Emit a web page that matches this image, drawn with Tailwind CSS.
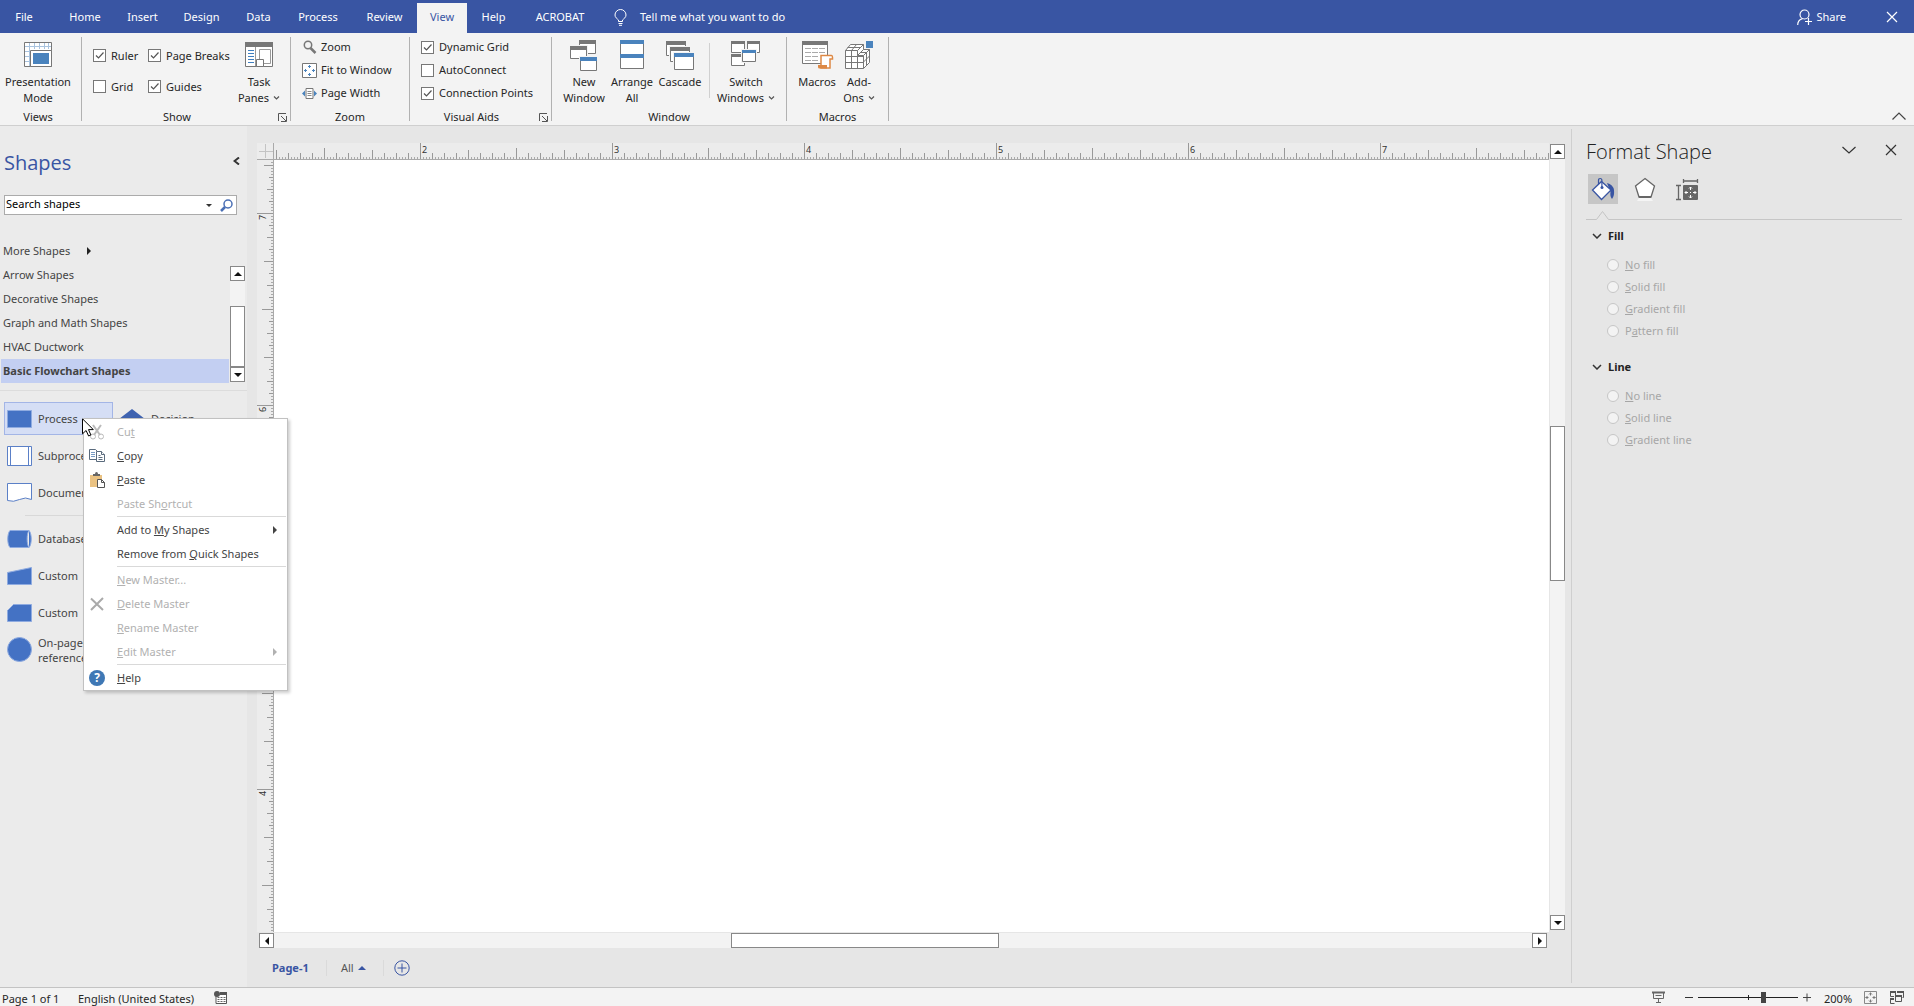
<!DOCTYPE html>
<html lang="en">
<head>
    <meta charset="UTF-8">
    <meta name="viewport" content="width=device-width, initial-scale=1.0">
    <title>Drawing - Page-1</title>
    <script src="https://cdn.jsdelivr.net/npm/@tailwindcss/browser@4"></script>
</head>
<body class="flex h-screen flex-col overflow-hidden bg-[#e6e6e6] font-['Noto_Sans','Open_Sans',sans-serif] text-[11px] leading-4 text-[#262626]">

    <!-- Shared icon symbols -->
    <svg class="hidden" aria-hidden="true">
        <symbol id="tick" viewBox="0 0 13 13"><path d="M3 6.5 5.5 9 10.5 3.5" fill="none" stroke="#555" stroke-width="1.2"/></symbol>
        <symbol id="caret" viewBox="0 0 7 4"><path d="M1 .5 3.5 3 6 .5" fill="none" stroke="#555" stroke-width="1.2"/></symbol>
        <symbol id="launcher" viewBox="0 0 9 9"><path d="M.5 8V.5H8M8.500 3v5.500H3M3 3l5 5" fill="none" stroke="#555"/></symbol>
        <symbol id="chev-down" viewBox="0 0 10 6"><path d="M1 1l4 4 4-4" fill="none" stroke="#333" stroke-width="1.5"/></symbol>
        <symbol id="cross" viewBox="0 0 12 12"><path d="M1 1l10 10M11 1L1 11" fill="none" stroke="currentColor" stroke-width="1.200"/></symbol>
        <symbol id="tri-up" viewBox="0 0 8 4"><path d="M0 4 4 0 8 4z" fill="currentColor"/></symbol>
        <symbol id="tri-down" viewBox="0 0 8 4"><path d="M0 0h8L4 4z" fill="currentColor"/></symbol>
        <symbol id="tri-right" viewBox="0 0 4 8"><path d="M0 0v8l4-4z" fill="currentColor"/></symbol>
        <symbol id="tri-left" viewBox="0 0 4 8"><path d="M4 0v8L0 4z" fill="currentColor"/></symbol>
    </svg>

    <!-- Tab bar -->
    <header class="flex h-[33px] shrink-0 items-end bg-[#3955a3] text-white">
        <nav class="flex h-[30px]">
            <button class="w-12 pb-[2px]">File</button>
            <button class="ml-[7px] w-[60px] pb-[2px]">Home</button>
            <button class="w-[55px] pb-[2px]">Insert</button>
            <button class="w-[63px] pb-[2px]">Design</button>
            <button class="w-[51px] pb-[2px]">Data</button>
            <button class="w-[68px] pb-[2px]">Process</button>
            <button class="w-[65px] pb-[2px]">Review</button>
            <button class="w-[50px] bg-[#f3f3f3] pb-[2px] text-[#3955a3]">View</button>
            <button class="w-[53px] pb-[2px]">Help</button>
            <button class="w-[80px] pb-[2px]">ACROBAT</button>
        </nav>
        <button class="ml-[14px] flex h-[30px] items-center pb-[2px]">
            <svg class="mr-[13px] h-[17px] w-[13px]" viewBox="0 0 13 17" fill="none" stroke="#fff"><path d="M4.500 12.500V11C3 9.500 1 8.500 1 6a5.500 5.500 0 0 1 11 0c0 2.500-2 3.500-3.500 5v1.500zM4.500 14.500h4M5 16.300h3"/></svg>
            Tell me what you want to do
        </button>
        <button class="ml-auto flex h-[30px] items-center gap-1 pb-[2px]">
            <svg class="h-[17px] w-[15px]" viewBox="0 0 15 17" fill="none" stroke="#fff" stroke-width="1.200"><circle cx="7.500" cy="5.500" r="4.500"/><path d="M.7 16c0-3.500 2-5.500 4.800-6.300M11.500 9v7M8 12.500h7"/></svg>
            Share
        </button>
        <button class="mr-4 ml-10 flex h-[30px] items-center pb-[2px]" aria-label="Close">
            <svg class="size-3"><use href="#cross"/></svg>
        </button>
    </header>

    <!-- Ribbon -->
    <div class="flex h-[93px] shrink-0 border-b border-[#cfcfcf] bg-[#f3f3f3]">
        <section class="flex w-[81px] shrink-0 flex-col items-center pt-1">
            <div class="h-[72px] pt-0.5 pr-[5px]">
                <button class="flex flex-col items-center">
                    <svg class="mb-px size-[34px]" viewBox="0 0 34 34">
                        <path d="M3.500 3.500h27v24h-27z" fill="#fff" stroke="#777"/>
                        <path d="M4 7.500h26M4 12.500h5M4 17.500h5M4 22.500h5M8.500 4v23M13.500 4v6M18.500 4v6M23.500 4v6M27.500 4v6" stroke="#a9c3de"/>
                        <path d="M9.500 11.500h21v16h-21z" fill="#fff" stroke="#777"/>
                        <path d="M12 14h16v11H12z" fill="#4a83bd"/>
                    </svg>
                    <span>Presentation</span><span>Mode</span>
                </button>
            </div>
            <h2 class="pr-[5px]">Views</h2>
        </section>
        <div class="my-1 w-px shrink-0 bg-[#b1b1b1]"></div>

        <section class="relative flex w-[208px] shrink-0 flex-col pt-1">
            <div class="flex h-[72px] pl-[11px]">
                <div class="grid w-[144px] grid-cols-[55px_1fr] grid-rows-[31px_31px] items-center pt-[3px]">
                    <label class="relative flex items-center gap-[5px]"><input type="checkbox" checked class="size-[13px] appearance-none border border-[#777] bg-white"><svg class="absolute left-0 size-[13px]"><use href="#tick"/></svg>Ruler</label>
                    <label class="relative flex items-center gap-[5px]"><input type="checkbox" checked class="size-[13px] appearance-none border border-[#777] bg-white"><svg class="absolute left-0 size-[13px]"><use href="#tick"/></svg>Page Breaks</label>
                    <label class="relative flex items-center gap-[5px]"><input type="checkbox" class="size-[13px] appearance-none border border-[#777] bg-white">Grid</label>
                    <label class="relative flex items-center gap-[5px]"><input type="checkbox" checked class="size-[13px] appearance-none border border-[#777] bg-white"><svg class="absolute left-0 size-[13px]"><use href="#tick"/></svg>Guides</label>
                </div>
                <button class="flex w-[44px] flex-col items-center pt-0.5">
                    <svg class="mb-px size-[34px]" viewBox="0 0 34 34">
                        <path d="M3.500 3.500h27v24h-27z" fill="#fff" stroke="#777"/>
                        <path d="M3 3h28v5H3z" fill="#777"/>
                        <path d="M13.500 8v19" stroke="#999"/>
                        <path d="M6 11.500h6M6 14.500h6M6 17.500h6M6 20.500h6M6 23.500h6" stroke="#3f7fc0"/>
                        <path d="M17.500 10.500h11v14h-11z" fill="#fff" stroke="#999"/>
                        <path d="M14.500 20.500h7v7h-7z" fill="#fff" stroke="#777"/>
                    </svg>
                    <span>Task</span>
                    <span class="flex items-center gap-1">Panes <svg class="h-1 w-[7px]"><use href="#caret"/></svg></span>
                </button>
            </div>
            <h2 class="pr-[18px] text-center">Show</h2>
            <button class="absolute right-[3px] bottom-[3px]" aria-label="Show settings"><svg class="size-[9px]"><use href="#launcher"/></svg></button>
        </section>
        <div class="my-1 w-px shrink-0 bg-[#b1b1b1]"></div>

        <section class="flex w-[118px] shrink-0 flex-col pt-1">
            <div class="flex h-[72px] flex-col gap-[7px] pt-0.5 pl-[11px]">
                <button class="flex items-center gap-1">
                    <svg class="size-[15px]" viewBox="0 0 15 15" fill="none" stroke="#777"><circle cx="6" cy="5" r="3.700" stroke-width="1.500"/><path d="M8.500 8l5 5" stroke-width="2.500"/></svg>Zoom
                </button>
                <button class="flex items-center gap-1">
                    <svg class="size-[15px]" viewBox="0 0 15 15"><path d="M.5.5h14v14H.5z" fill="#fff" stroke="#777"/><path d="M7.500 2v3M7.500 10v3M2 7.500h3M10 7.500h3M6 4l1.500-1.500L9 4M6 11l1.500 1.500L9 11M4 6 2.500 7.500 4 9M11 6l1.500 1.500L11 9" fill="none" stroke="#4a83bd"/></svg>Fit to Window
                </button>
                <button class="flex items-center gap-1">
                    <svg class="size-[15px]" viewBox="0 0 15 15"><path d="M4 2.500h7v10H4z" fill="#fff" stroke="#777"/><path d="M5.500 5.500h4M5.500 7.500h4M5.500 9.500h4" stroke="#888"/><path d="M0 7.500 3 4.500v6zM15 7.500l-3-3v6z" fill="#4a83bd"/></svg>Page Width
                </button>
            </div>
            <h2 class="text-center">Zoom</h2>
        </section>
        <div class="my-1 w-px shrink-0 bg-[#b1b1b1]"></div>

        <section class="relative flex w-[141px] shrink-0 flex-col pt-1">
            <div class="flex h-[72px] flex-col gap-[7px] pt-0.5 pl-[11px]">
                <label class="relative flex items-center gap-[5px]"><input type="checkbox" checked class="size-[13px] appearance-none border border-[#777] bg-white"><svg class="absolute left-0 size-[13px]"><use href="#tick"/></svg>Dynamic Grid</label>
                <label class="relative flex items-center gap-[5px]"><input type="checkbox" class="size-[13px] appearance-none border border-[#777] bg-white">AutoConnect</label>
                <label class="relative flex items-center gap-[5px]"><input type="checkbox" checked class="size-[13px] appearance-none border border-[#777] bg-white"><svg class="absolute left-0 size-[13px]"><use href="#tick"/></svg>Connection Points</label>
            </div>
            <h2 class="pr-[18px] text-center">Visual Aids</h2>
            <button class="absolute right-[3px] bottom-[3px]" aria-label="Visual aid settings"><svg class="size-[9px]"><use href="#launcher"/></svg></button>
        </section>
        <div class="my-1 w-px shrink-0 bg-[#b1b1b1]"></div>

        <section class="flex w-[234px] shrink-0 flex-col pt-1">
            <div class="flex h-[72px] pt-0.5 pl-2">
                <button class="flex w-12 flex-col items-center">
                    <svg class="mb-px size-[34px]" viewBox="0 0 34 34">
                        <path d="M12.500 1.500h16v13h-16z" fill="#fff" stroke="#777"/><path d="M12 1h17v4H12z" fill="#777"/>
                        <path d="M3 6h18v15H3z" fill="#f3f3f3"/><path d="M3.500 7.500h16v12h-16z" fill="#fff" stroke="#777"/><path d="M3 7h17v4H3z" fill="#777"/>
                        <path d="M12 17h18v15H12z" fill="#f3f3f3"/><path d="M13.500 18.500h16v13h-16z" fill="#fff" stroke="#777"/><path d="M13 18h17v4H13z" fill="#4a83bd"/>
                    </svg>
                    <span>New</span><span>Window</span>
                </button>
                <button class="flex w-12 flex-col items-center">
                    <svg class="mb-px size-[34px]" viewBox="0 0 34 34">
                        <path d="M5.500 1.500h23v28h-23z" fill="#fff" stroke="#777"/><path d="M5 1h24v4H5zM5 15h24v4H5z" fill="#4a83bd"/>
                    </svg>
                    <span>Arrange</span><span>All</span>
                </button>
                <button class="flex w-12 flex-col items-center">
                    <svg class="mb-px size-[34px]" viewBox="0 0 34 34">
                        <path d="M3.500 2.500h19v14h-19z" fill="#fff" stroke="#777"/><path d="M3 2h20v4H3z" fill="#777"/>
                        <path d="M6 7h22v17H6z" fill="#f3f3f3"/><path d="M7.500 8.500h19v14h-19z" fill="#fff" stroke="#777"/><path d="M7 8h20v4H7z" fill="#777"/>
                        <path d="M10 13h22v17H10z" fill="#f3f3f3"/><path d="M11.500 14.500h19v16h-19z" fill="#fff" stroke="#777"/><path d="M11 14h20v4H11z" fill="#4a83bd"/>
                    </svg>
                    <span>Cascade</span>
                </button>
                <div class="mt-1 ml-[5px] h-[55px] w-px bg-[#d0d0d0]"></div>
                <button class="ml-1 flex w-[64px] flex-col items-center">
                    <svg class="mb-px size-[34px]" viewBox="0 0 34 34">
                        <path d="M2.500 2.500h13v11h-13zM18.500 2.500h12v11h-12zM2.500 15.500h13v11h-13z" fill="#fff" stroke="#777"/><path d="M2 2h14v3H2zM18 2h13v3H18zM2 15h14v3H2z" fill="#777"/>
                        <path d="M12 10h16v14H12z" fill="#f3f3f3"/><path d="M13.500 11.500h13v11h-13z" fill="#fff" stroke="#777"/><path d="M13 11h14v3H13z" fill="#4a83bd"/>
                    </svg>
                    <span>Switch</span>
                    <span class="flex items-center gap-1">Windows <svg class="h-1 w-[7px]"><use href="#caret"/></svg></span>
                </button>
            </div>
            <h2 class="text-center">Window</h2>
        </section>
        <div class="my-1 w-px shrink-0 bg-[#b1b1b1]"></div>

        <section class="flex w-[101px] shrink-0 flex-col pt-1">
            <div class="flex h-[72px] pt-0.5 pl-[7px]">
                <button class="flex w-[46px] flex-col items-center">
                    <svg class="mb-px size-[34px]" viewBox="0 0 34 34">
                        <path d="M2.500 2.500h25v22h-25z" fill="#fff" stroke="#777"/><path d="M2 2h26v4H2z" fill="#777"/>
                        <path d="M5 9.500h20M5 13.500h20M5 17.500h14M5 21.500h14" stroke="#aaa" stroke-dasharray="6 1"/>
                        <path d="M21 16.500h10.500q1 0 1 2v1.500h-2.500v9H21z" fill="#fff" stroke="#dd8844" stroke-width="1.500"/><path d="M18 26h9v3.500h-7.500q-1.500 0-1.500-1.500z" fill="#dd8844"/>
                    </svg>
                    <span>Macros</span>
                </button>
                <button class="flex w-[38px] flex-col items-center">
                    <svg class="mb-px size-[34px]" viewBox="0 0 34 34">
                        <path d="M3.500 11.500 8.500 5.500h13v4l6 1v13l-6 6h-18z" fill="#fff"/>
                        <path d="M3.500 11.500h12v5h6v13h-18zM3.500 17.500h18M3.500 23.500h18M9.500 11.500v18M15.500 16.500v13M3.500 11.500l5-6h13l-6 6M9.500 11.500l5-6M5.500 8.500h13M21.500 5.500v5M15.500 16.500l6-6h6l-6 6M18.500 13.500h6M27.500 10.500v13l-6 6M21.500 23l6-6M24.500 13.500v13" fill="none" stroke="#777"/>
                        <path d="M24 2h7v7h-7z" fill="#4a83bd"/>
                    </svg>
                    <span>Add-</span>
                    <span class="flex items-center gap-1">Ons <svg class="h-1 w-[7px]"><use href="#caret"/></svg></span>
                </button>
            </div>
            <h2 class="text-center">Macros</h2>
        </section>
        <div class="my-1 w-px shrink-0 bg-[#b1b1b1]"></div>
        <button class="mt-auto mr-2 mb-[5px] ml-auto" aria-label="Collapse ribbon">
            <svg class="h-2 w-[14px]" viewBox="0 0 14 8"><path d="M.5 7.500 7 1l6.500 6.500" fill="none" stroke="#444" stroke-width="1.200"/></svg>
        </button>
    </div>

    <div class="flex min-h-0 flex-1">
        <!-- Shapes pane -->
        <aside class="flex w-[247px] shrink-0 flex-col bg-[#ebebeb] pt-[23px] text-[#444]">
            <div class="flex h-7 items-center justify-between pr-[7px] pl-1">
                <h1 class="font-['Open_Sans',sans-serif] text-[20px] leading-7 text-[#3955a3]">Shapes</h1>
                <button class="pb-1" aria-label="Minimize pane"><svg class="h-2 w-[7px]" viewBox="0 0 7 8"><path d="M6 .5 1.500 4 6 7.500" fill="none" stroke="#333" stroke-width="2"/></svg></button>
            </div>
            <div class="mt-[18px] mr-[10px] ml-1 flex h-5 items-center border border-[#ababab] bg-white">
                <input type="text" value="Search shapes" aria-label="Search shapes" class="min-w-0 flex-1 pb-0.5 pl-px text-black outline-none">
                <svg class="h-[3px] w-[6px] text-[#333]"><use href="#tri-down"/></svg>
                <button class="mr-[3px] ml-2" aria-label="Search"><svg class="size-[13px]" viewBox="0 0 13 13" fill="none" stroke="#4a6fb5"><circle cx="8" cy="5" r="4" stroke-width="1.500"/><path d="M5 8l-4 4" stroke-width="2.500"/></svg></button>
            </div>
            <button class="mt-6 flex h-6 items-center gap-[17px] pl-[3px]">More Shapes <svg class="h-2 w-1 text-[#222]"><use href="#tri-right"/></svg></button>
            <div class="flex">
                <ul class="mr-px ml-px flex-1 leading-6 *:pl-0.5">
                    <li>Arrow Shapes</li>
                    <li>Decorative Shapes</li>
                    <li>Graph and Math Shapes</li>
                    <li>HVAC Ductwork</li>
                    <li class="bg-[#c3cff2] font-bold">Basic Flowchart Shapes</li>
                </ul>
                <div class="mt-[3px] mr-0.5 flex h-[116px] w-[15px] flex-col bg-[#f3f3f3] text-[#111]">
                    <button class="grid h-[15px] place-items-center border border-[#888] bg-white" aria-label="Scroll up"><svg class="h-1 w-2"><use href="#tri-up"/></svg></button>
                    <div class="mt-auto h-[61px] border border-[#888] bg-white"></div>
                    <button class="grid h-[15px] place-items-center border border-[#888] bg-white" aria-label="Scroll down"><svg class="h-1 w-2"><use href="#tri-down"/></svg></button>
                </div>
            </div>
            <div class="mt-[7px] border-t border-[#dcdcdc]"></div>
            <div class="flex flex-col gap-1 pt-[11px] pl-1 leading-[15px]">
                <div class="flex">
                    <button class="flex h-[33px] w-[109px] items-center border border-[#a3b5e6] bg-[#d5def5] pl-0.5">
                        <svg class="mr-[6px] h-[18px] w-[25px]" viewBox="0 0 25 18"><path d="M.5.500h24v17H.5z" fill="#4472c4" stroke="#8fabe0"/></svg>Process
                    </button>
                    <button class="flex h-[33px] items-center pl-[6px]">
                        <svg class="mr-[6px] h-[20px] w-[26px]" viewBox="0 0 26 20"><path d="M13 0 26 10 13 20 0 10z" fill="#3f63b0"/></svg>Decision
                    </button>
                </div>
                <button class="flex h-[33px] items-center pl-[3px]">
                    <svg class="mr-[6px] h-[20px] w-[25px]" viewBox="0 0 25 20"><path d="M.5.500h24v19H.5zM3.500.500v19M21.500.500v19" fill="#fff" stroke="#5b80c7"/></svg>Subprocess
                </button>
                <button class="flex h-[33px] items-center pl-[3px]">
                    <svg class="mr-[6px] h-[20px] w-[25px]" viewBox="0 0 25 20"><path d="M.5.500h24v16q-6-3-12 0t-12 1z" fill="#fff" stroke="#5b80c7"/></svg>Document
                </button>
                <div class="mt-0.5 mr-6 mb-0.5 ml-[21px] border-t border-[#d8d8d8]"></div>
                <button class="flex h-[33px] items-center pl-[3px]">
                    <svg class="mr-[6px] h-[18px] w-[25px]" viewBox="0 0 25 18"><path d="M3 .500h19c3 3 3 14 0 17H3C0 14.500 0 3.500 3 .500zM22 .500c-2.500 3-2.500 14 0 17" fill="#4472c4" stroke="#8fabe0"/></svg>Database
                </button>
                <button class="flex h-[33px] items-center pl-[3px]">
                    <svg class="mr-[6px] h-[18px] w-[25px]" viewBox="0 0 25 18"><path d="M.5 5.500 24.500.500v17H.5z" fill="#4472c4" stroke="#8fabe0"/></svg>Custom&ensp;1
                </button>
                <button class="flex h-[33px] items-center pl-[3px]">
                    <svg class="mr-[6px] h-[18px] w-[25px]" viewBox="0 0 25 18"><path d="M.5 6.500 6.500.500h18v17H.5z" fill="#4472c4" stroke="#8fabe0"/></svg>Custom&ensp;2
                </button>
                <button class="flex h-[33px] items-center pl-[3px] text-left">
                    <svg class="mr-[6px] size-[25px]" viewBox="0 0 25 25"><circle cx="12.500" cy="12.500" r="12" fill="#4472c4" stroke="#8fabe0"/></svg>On-page<br>reference
                </button>
            </div>
        </aside>

        <!-- Drawing window -->
        <main class="flex min-w-0 flex-1 flex-col pt-[17px] pl-[10px]">
            <div class="flex min-h-0 flex-1">
                <div class="flex min-w-0 flex-1 flex-col">
                    <div class="flex h-[17px] bg-[#ececec]">
                        <svg class="h-[17px] w-[17px] shrink-0" viewBox="0 0 17 17"><path d="M8.500 1v14M2 8.500h14" stroke="#c4c4c4"/><path d="M0 16.500h17M16.500 0v17" stroke="#aaa"/></svg>
                        <svg class="h-[17px] min-w-0 flex-1" shape-rendering="crispEdges">
                            <defs>
                                <pattern id="h3" x="146" width="3" height="17" patternUnits="userSpaceOnUse"><path d="M0 14h1v2H0z" fill="#aaa"/></pattern>
                                <pattern id="h12" x="146" width="12" height="17" patternUnits="userSpaceOnUse"><path d="M0 10h1v6H0z" fill="#999"/></pattern>
                                <pattern id="h48" x="146" width="48" height="17" patternUnits="userSpaceOnUse"><path d="M0 7h1v9H0z" fill="#999"/></pattern>
                                <pattern id="h96" x="146" width="96" height="17" patternUnits="userSpaceOnUse"><path d="M0 5h1v11H0z" fill="#999"/></pattern>
                                <pattern id="h192" x="146" width="192" height="17" patternUnits="userSpaceOnUse"><path d="M0 0h1v16H0z" fill="#999"/></pattern>
                            </defs>
                            <rect width="100%" height="17" fill="url(#h3)"/><rect width="100%" height="17" fill="url(#h12)"/><rect width="100%" height="17" fill="url(#h48)"/><rect width="100%" height="17" fill="url(#h96)"/><rect width="100%" height="17" fill="url(#h192)"/>
                            <rect y="16" width="100%" height="1" fill="#aaa"/>
                            <g font-size="9" fill="#333">
                                <text x="148" y="10">2</text><text x="340" y="10">3</text><text x="532" y="10">4</text><text x="724" y="10">5</text><text x="916" y="10">6</text><text x="1108" y="10">7</text>
                            </g>
                        </svg>
                    </div>
                    <div class="flex min-h-0 flex-1">
                        <svg class="h-full w-[17px] shrink-0 bg-[#ececec]" shape-rendering="crispEdges">
                            <defs>
                                <pattern id="v3" y="53" width="17" height="3" patternUnits="userSpaceOnUse"><path d="M14 0h2v1h-2z" fill="#aaa"/></pattern>
                                <pattern id="v12" y="53" width="17" height="12" patternUnits="userSpaceOnUse"><path d="M12 0h4v1h-4z" fill="#999"/></pattern>
                                <pattern id="v24" y="53" width="17" height="24" patternUnits="userSpaceOnUse"><path d="M10 0h6v1h-6z" fill="#999"/></pattern>
                                <pattern id="v48" y="53" width="17" height="48" patternUnits="userSpaceOnUse"><path d="M7 0h9v1H7z" fill="#999"/></pattern>
                                <pattern id="v96" y="53" width="17" height="96" patternUnits="userSpaceOnUse"><path d="M5 0h11v1H5z" fill="#999"/></pattern>
                                <pattern id="v192" y="53" width="17" height="192" patternUnits="userSpaceOnUse"><path d="M0 0h16v1H0z" fill="#999"/></pattern>
                            </defs>
                            <rect width="17" height="100%" fill="url(#v3)"/><rect width="17" height="100%" fill="url(#v12)"/><rect width="17" height="100%" fill="url(#v24)"/><rect width="17" height="100%" fill="url(#v48)"/><rect width="17" height="100%" fill="url(#v96)"/><rect width="17" height="100%" fill="url(#v192)"/>
                            <rect x="16" width="1" height="100%" fill="#aaa"/>
                            <g font-size="9" fill="#333">
                                <text transform="translate(9 60) rotate(-90)">7</text><text transform="translate(9 252) rotate(-90)">6</text><text transform="translate(9 444) rotate(-90)">5</text><text transform="translate(9 636) rotate(-90)">4</text>
                            </g>
                        </svg>
                        <div class="flex-1 bg-white"></div>
                    </div>
                </div>
                <div class="mt-px mr-[6px] mb-0.5 ml-px flex w-[15px] flex-col bg-[#f3f3f3] text-[#111]">
                    <button class="grid h-[15px] place-items-center border border-[#888] bg-white" aria-label="Scroll up"><svg class="h-1 w-2"><use href="#tri-up"/></svg></button>
                    <div class="grow-[267]"></div>
                    <div class="h-[155px] border border-[#888] bg-white"></div>
                    <div class="grow-[333]"></div>
                    <button class="grid h-[15px] place-items-center border border-[#888] bg-white" aria-label="Scroll down"><svg class="h-1 w-2"><use href="#tri-down"/></svg></button>
                </div>
            </div>
            <div class="mt-px mr-6 ml-0.5 flex h-[15px] shrink-0 bg-[#f3f3f3] text-[#111]">
                <button class="grid w-[15px] place-items-center border border-[#888] bg-white" aria-label="Scroll left"><svg class="h-2 w-1"><use href="#tri-left"/></svg></button>
                <div class="grow-[457]"></div>
                <div class="w-[268px] border border-[#888] bg-white"></div>
                <div class="grow-[533]"></div>
                <button class="grid w-[15px] place-items-center border border-[#888] bg-white" aria-label="Scroll right"><svg class="h-2 w-1"><use href="#tri-right"/></svg></button>
            </div>
            <!-- Page tabs -->
            <nav class="flex h-[39px] shrink-0 items-center pl-[15px]">
                <button class="w-[54px] text-left font-bold text-[#3955a3]">Page-1</button>
                <div class="h-4 w-px bg-[#dadada]"></div>
                <button class="flex w-14 items-center gap-1 pl-[14px] text-[#555]">All <svg class="h-1 w-2 text-[#3955a3]"><use href="#tri-up"/></svg></button>
                <div class="h-4 w-px bg-[#dadada]"></div>
                <button class="pl-[10px]" aria-label="Insert page"><svg class="size-4" viewBox="0 0 16 16" fill="none" stroke="#3955a3"><circle cx="8" cy="8" r="7.200"/><path d="M8 3.500v9M3.500 8h9"/></svg></button>
            </nav>
        </main>

        <!-- Format Shape pane -->
        <aside class="mt-[3px] mb-1 flex w-[343px] shrink-0 flex-col border-l border-[#cfcfcf] pt-[9px] pr-3 pl-[14px]">
            <div class="flex h-7 items-center">
                <h1 class="mr-auto font-['Open_Sans',sans-serif] text-[20px] leading-7 font-light text-[#222]">Format Shape</h1>
                <button class="mb-1" aria-label="Pane options"><svg class="h-2 w-[14px]" viewBox="0 0 14 8"><path d="M.5 1 7 7l6.500-6" fill="none" stroke="#333" stroke-width="1.200"/></svg></button>
                <button class="mr-[5px] mb-1 ml-[29px] text-[#333]" aria-label="Close pane"><svg class="size-3"><use href="#cross"/></svg></button>
            </div>
            <div class="mt-2 flex gap-3 pl-0.5">
                <button class="grid size-[30px] place-items-center bg-[#c6c6c6]" aria-label="Fill and line">
                    <svg class="size-6" viewBox="0 0 24 24"><path d="M16 6q6 1.500 7 7c.3 4 0 6-2 9-1.500-2-2-4-1.500-7z" fill="#3955a3"/><path d="M10.500 4.500 20 13l-9.500 9.500L1.500 13z" fill="#fff" stroke="#3955a3" stroke-width="1.300"/><path d="M7.500 7V3.500q0-2 1.700-2t1.700 2V10" fill="none" stroke="#3955a3" stroke-width="1.200"/><circle cx="11" cy="10.500" r="1.500" fill="#3955a3"/></svg>
                </button>
                <button class="grid size-[30px] place-items-center" aria-label="Effects">
                    <svg class="size-6" viewBox="0 0 24 24"><path d="M12 1.500 21.500 9l-3.500 11H6L2.500 9z" fill="#fff" stroke="#666" stroke-width="1.300"/><path d="M6 20h12" stroke="#666" stroke-width="2"/><path d="M6 21h12l2 3H4z" fill="#f5f5f5"/></svg>
                </button>
                <button class="grid size-[30px] place-items-center" aria-label="Size">
                    <svg class="size-6" viewBox="0 0 24 24"><path d="M8.500 2v4M22.500 2v4M9 4h13M1 8.500h5M1 22.500h5M3.500 9v13" fill="none" stroke="#666" stroke-width="1.300"/><rect x="8" y="8" width="15" height="15" rx="1" fill="#666"/><path d="M15.500 10v3M15.500 18v3M10 15.500h3M18 15.500h3M14 11.500l1.500-1.500 1.500 1.500M14 19.500l1.500 1.500 1.500-1.500M11.500 14 10 15.500l1.500 1.500M19.500 14l1.500 1.500-1.500 1.500M15 15.500h1" fill="none" stroke="#fff"/></svg>
                </button>
            </div>
            <div class="mt-[6px] flex h-[10px] items-end">
                <svg class="h-[10px] w-[23px] shrink-0" viewBox="0 0 23 10"><path d="M0 9.500h10.500l6-8 6 8H23" fill="none" stroke="#c4c4c4"/></svg>
                <div class="flex-1 border-b border-[#c6c6c6]"></div>
            </div>
            <button class="mt-2 flex items-center gap-[6px] pl-[6px] font-bold text-[#222]"><svg class="h-[6px] w-[10px]"><use href="#chev-down"/></svg>Fill</button>
            <div class="mt-[10px] flex flex-col text-[#a6a6a6] *:flex *:h-[22px] *:items-center *:gap-[6px] *:pl-[21px]">
                <label><input type="radio" name="fill" disabled class="size-3 appearance-none rounded-full border border-[#c6c6c6] bg-[#f3f3f3]"><span><u>N</u>o fill</span></label>
                <label><input type="radio" name="fill" disabled class="size-3 appearance-none rounded-full border border-[#c6c6c6] bg-[#f3f3f3]"><span><u>S</u>olid fill</span></label>
                <label><input type="radio" name="fill" disabled class="size-3 appearance-none rounded-full border border-[#c6c6c6] bg-[#f3f3f3]"><span><u>G</u>radient fill</span></label>
                <label><input type="radio" name="fill" disabled class="size-3 appearance-none rounded-full border border-[#c6c6c6] bg-[#f3f3f3]"><span>P<u>a</u>ttern fill</span></label>
            </div>
            <button class="mt-[17px] flex items-center gap-[6px] pl-[6px] font-bold text-[#222]"><svg class="h-[6px] w-[10px]"><use href="#chev-down"/></svg>Line</button>
            <div class="mt-[10px] flex flex-col text-[#a6a6a6] *:flex *:h-[22px] *:items-center *:gap-[6px] *:pl-[21px]">
                <label><input type="radio" name="line" disabled class="size-3 appearance-none rounded-full border border-[#c6c6c6] bg-[#f3f3f3]"><span><u>N</u>o line</span></label>
                <label><input type="radio" name="line" disabled class="size-3 appearance-none rounded-full border border-[#c6c6c6] bg-[#f3f3f3]"><span><u>S</u>olid line</span></label>
                <label><input type="radio" name="line" disabled class="size-3 appearance-none rounded-full border border-[#c6c6c6] bg-[#f3f3f3]"><span><u>G</u>radient line</span></label>
            </div>
        </aside>
    </div>

    <!-- Status bar -->
    <footer class="flex h-[19px] shrink-0 items-center border-t border-[#c3c3c3] bg-[#f3f3f3] pt-[3px] pl-0.5">
        <span class="w-[76px]">Page 1 of 1</span>
        <span class="w-[136px]">English (United States)</span>
        <svg class="mb-[3px] h-[13px] w-[13px]" viewBox="0 0 13 13"><path d="M2 5v7.500h10.500V3" fill="#fff" stroke="#555"/><path d="M6 1h7v3H6z" fill="#555"/><circle cx="3" cy="3" r="3" fill="#555"/><path d="M3.500 6.500h8M3.500 8.500h8M3.500 10.500h8" stroke="#666" stroke-dasharray="2 1"/></svg>
        <svg class="mb-[3px] ml-auto h-3 w-[13px]" viewBox="0 0 13 12"><path d="M0 1.500h13" stroke="#666" stroke-width="2"/><path d="M1.500 2v5.500h10V2M3.500 4.500h6M6.500 8v3.500M4 11.500h5" fill="none" stroke="#666"/></svg>
        <button class="mb-[3px] ml-5" aria-label="Zoom out"><svg class="h-[9px] w-[8px]" viewBox="0 0 8 9"><path d="M0 4.500h8" stroke="#333"/></svg></button>
        <div class="relative mx-[5px] mb-[3px] flex h-[11px] w-[100px] items-center">
            <div class="absolute left-[50px] h-[5px] w-px bg-[#222]"></div>
            <input type="range" min="0" max="100" value="66" aria-label="Zoom level" class="relative h-[11px] w-full appearance-none bg-linear-to-b from-transparent from-45% via-[#222] via-50% to-transparent to-55% [&::-webkit-slider-thumb]:h-[11px] [&::-webkit-slider-thumb]:w-[5px] [&::-webkit-slider-thumb]:appearance-none [&::-webkit-slider-thumb]:bg-[#444]">
        </div>
        <button class="mb-[3px]" aria-label="Zoom in"><svg class="h-[9px] w-[8px]" viewBox="0 0 8 9"><path d="M0 4.500h8M4 .5v8" stroke="#444"/></svg></button>
        <button class="ml-[13px] w-10 text-left">200%</button>
        <button class="mb-[3px]" aria-label="Fit page"><svg class="size-[13px]" viewBox="0 0 13 13"><path d="M.5.500h12v12H.5z" fill="none" stroke="#888"/><path d="M6.500 1.500v3M6.500 8.500v3M1.500 6.500h3M8.500 6.500h3M5 3.500 6.500 2 8 3.500M5 9.500 6.500 11 8 9.500M3.500 5 2 6.500 3.500 8M9.500 5 11 6.500 9.500 8" fill="none" stroke="#777"/></svg></button>
        <button class="mr-[10px] mb-[3px] ml-[13px]" aria-label="Switch windows"><svg class="h-[13px] w-[14px]" viewBox="0 0 14 13" fill="none" stroke="#555"><path d="M4 5.500H.5v-4h5V4M7 1.500h6.500v5h-1M4.500 12.500h-4v-5H4"/><path d="M0 1h6M7 1h7M0 8h4M5 5h7" stroke-width="2"/><path d="M5.500 5v5.500h6V5"/></svg></button>
    </footer>

    <!-- Context menu -->
    <ul class="absolute top-[418px] left-[83px] w-[205px] border border-[#c1c1c1] bg-white pt-px text-[#444] shadow-[2px_2px_3px_rgba(0,0,0,0.2)]">
        <li><button disabled class="flex h-6 w-full items-center pl-[5px] text-[#b1b1b1]"><svg class="mr-3 size-4" viewBox="0 0 16 16" fill="none" stroke="#bbb"><path d="M4 1l7 10M12 1 5 11" stroke-width="2"/><circle cx="4" cy="12.500" r="2.500"/><circle cx="12" cy="12.500" r="2.500"/></svg><span>Cu<u>t</u></span></button></li>
        <li><button class="flex h-6 w-full items-center pl-[5px]"><svg class="mr-3 size-4" viewBox="0 0 16 16" fill="#fff" stroke="#5a6b7d"><path d="M.5 1.500h6l2 2v8h-8z"/><path d="M2 4.500h4M2 6.500h4M2 8.500h4" stroke="#7a9cc4"/><path d="M7.500 3.500h5l3 3v7h-8z"/><path d="M12.500 3.500v3h3M9.500 7.500h2M9.500 9.500h4M9.500 11.500h4"/></svg><span><u>C</u>opy</span></button></li>
        <li><button class="flex h-6 w-full items-center pl-[5px]"><svg class="mr-3 size-4" viewBox="0 0 16 16"><path d="M1 3h12v12H1z" fill="#eac282"/><path d="M4 4V2h2q0-2 1.500-2T9 2h2v2z" fill="#666"/><path d="M8.500 7.500h4l3 3v5h-7z" fill="#fff" stroke="#555"/><path d="M12.500 7.500v3h3" fill="none" stroke="#555"/></svg><span><u>P</u>aste</span></button></li>
        <li><button disabled class="flex h-6 w-full items-center pl-[33px] text-[#b1b1b1]"><span>Paste Sh<u>o</u>rtcut</span></button></li>
        <li class="mr-px mb-px ml-[33px] h-px bg-[#d9d9d9]"></li>
        <li><button class="flex h-6 w-full items-center pr-[10px] pl-[33px]"><span>Add to <u>M</u>y Shapes</span><svg class="ml-auto h-2 w-1"><use href="#tri-right"/></svg></button></li>
        <li><button class="flex h-6 w-full items-center pl-[33px]"><span>Remove from <u>Q</u>uick Shapes</span></button></li>
        <li class="mr-px mb-px ml-[33px] h-px bg-[#d9d9d9]"></li>
        <li><button disabled class="flex h-6 w-full items-center pl-[33px] text-[#b1b1b1]"><span><u>N</u>ew Master...</span></button></li>
        <li><button disabled class="flex h-6 w-full items-center pl-[5px] text-[#b1b1b1]"><svg class="mr-3 size-4" viewBox="0 0 16 16"><path d="M2 2.500l12 11.500M14 2 2 14" stroke="#aaa" stroke-width="2"/></svg><span><u>D</u>elete Master</span></button></li>
        <li><button disabled class="flex h-6 w-full items-center pl-[33px] text-[#b1b1b1]"><span><u>R</u>ename Master</span></button></li>
        <li><button disabled class="flex h-6 w-full items-center pr-[10px] pl-[33px] text-[#b1b1b1]"><span><u>E</u>dit Master</span><svg class="ml-auto h-2 w-1"><use href="#tri-right"/></svg></button></li>
        <li class="mr-px mb-px ml-[33px] h-px bg-[#d9d9d9]"></li>
        <li><button class="flex h-6 w-full items-center pl-[5px]"><span class="mr-3 grid size-4 place-items-center rounded-full bg-[#3f78b5] text-[12px] font-bold text-white">?</span><span><u>H</u>elp</span></button></li>
    </ul>

    <!-- Mouse pointer -->
    <svg class="absolute top-[418px] left-[82px] h-[19px] w-3" viewBox="0 0 12 19"><path d="M.5.800v15l3.600-3.300 2.500 5.500 2.300-1-2.400-5.400H11.300z" fill="#fff" stroke="#000"/></svg>
</body>
</html>
